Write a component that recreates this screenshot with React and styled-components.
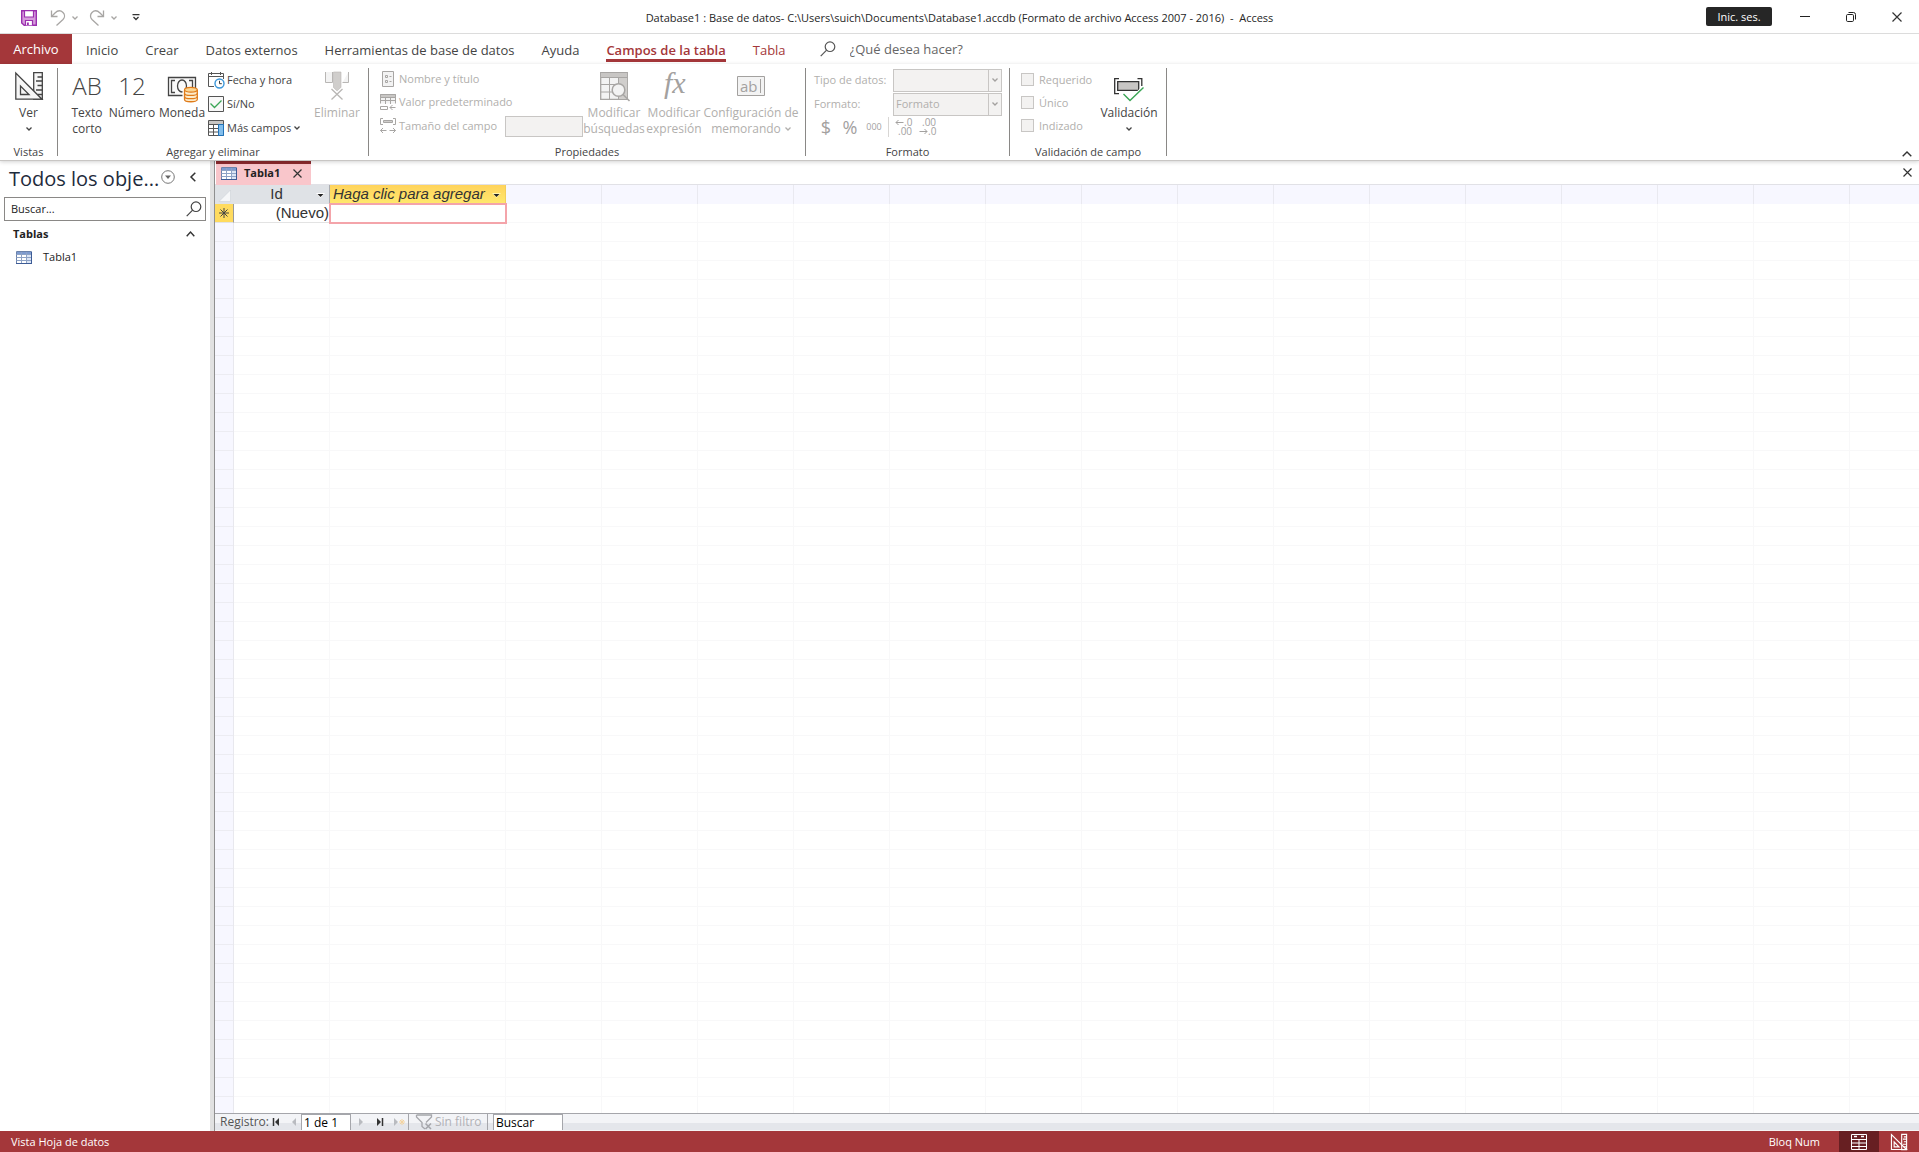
import React from 'react';
import styled, { createGlobalStyle, css } from 'styled-components';

const GlobalStyle = createGlobalStyle`
    * {
        box-sizing: border-box;
    }
    body {
        margin: 0;
        background: #fff;
        color: #444;
        font-family: "Open Sans", "Noto Sans", sans-serif;
        font-size: 11px;
        line-height: 16px;
    }
    button, input, select {
        font: inherit;
        color: inherit;
        margin: 0;
        padding: 0;
        border: 0;
        border-radius: 0;
        background: none;
    }
    svg {
        display: block;
        flex: none;
        overflow: visible;
    }
`

const Window = styled.div`
    height: 100vh;
    display: flex;
    flex-direction: column;
    overflow: hidden;
`

/* ---------- title bar ---------- */

const TitleBar = styled.header`
    display: grid;
    grid-template-columns: 1fr auto 1fr;
    align-items: center;
    height: 34px;
    flex: none;
    border-bottom: 1px solid #dcdcdc;
`

const QuickAccess = styled.div`
    display: flex;
    align-items: center;
    padding: 2px 0 0 21px;
`

const QuickButton = styled.button`
    display: flex;
    align-items: center;
    gap: 6px;
    margin-right: ${props => props.$after}px;
`

const Title = styled.h1`
    margin: 0;
    padding-top: 2px;
    font-size: 11px;
    font-weight: 400;
    color: #262626;
    white-space: pre;
`

const WindowControls = styled.div`
    display: flex;
    justify-content: flex-end;
    align-items: center;
`

const SignIn = styled.button`
    width: 66px;
    height: 19px;
    margin-right: 10px;
    border-radius: 2px;
    background: #262626;
    color: #fff;
`

const ControlButton = styled.button`
    display: flex;
    align-items: center;
    justify-content: center;
    width: 46px;
    height: 33px;
    &:last-child {
        width: 45px;
    }
`

/* ---------- ribbon tabs ---------- */

const Tabs = styled.nav`
    display: flex;
    align-items: stretch;
    height: 30px;
    flex: none;
    font-size: 13px;
`

const FileTab = styled.button`
    width: 72px;
    margin-right: 1px;
    background: #a4373a;
    color: #fff;
`

const Tab = styled.button`
    padding: 0 14px 2px 13px;
    white-space: nowrap;
    color: ${props => props.$context ? '#a4373a' : '#444'};
    font-weight: ${props => props.$active ? 600 : 400};
    span {
        display: block;
        padding-top: 7px;
        line-height: 18px;
        border-bottom: 3px solid ${props => props.$active ? '#a4373a' : 'transparent'};
    }
`

const TellMe = styled.label`
    display: flex;
    align-items: center;
    gap: 14px;
    margin-left: 20px;
    color: #666;
    input {
        width: 180px;
    }
    input::placeholder {
        color: #666;
        opacity: 1;
    }
`

/* ---------- ribbon ---------- */

const Ribbon = styled.section`
    position: relative;
    display: flex;
    flex: none;
    height: 97px;
    padding-top: 4px;
    border-bottom: 1px solid #c8c6c4;
    box-shadow: 0 1px 4px rgba(0,0,0,.18);
    z-index: 1;
`

const Group = styled.div`
    display: flex;
    flex-direction: column;
    width: ${props => props.$width}px;
`

const GroupBody = styled.div`
    display: flex;
    height: 76px;
    padding-left: ${props => props.$left || 0}px;
`

const GroupLabel = styled.div`
    text-align: center;
    color: #444;
    white-space: nowrap;
`

const Divider = styled.div`
    width: 1px;
    height: 88px;
    background: #8a8886;
`

const BigButton = styled.button`
    display: flex;
    flex-direction: column;
    align-items: center;
    width: ${props => props.$width}px;
    padding-top: 4px;
    font-size: 12px;
    white-space: nowrap;
    color: ${props => props.disabled ? '#b1afad' : '#444'};
`

const BigIcon = styled.span`
    display: flex;
    align-items: center;
    justify-content: center;
    height: 28px;
    margin-bottom: 5px;
    font-size: 24px;
    font-weight: 300;
`

const BigText = styled.span`
    display: flex;
    align-items: center;
    justify-content: center;
    gap: 4px;
    height: 16px;
`

const Stack = styled.div`
    display: flex;
    flex-direction: column;
    flex: none;
    width: ${props => props.$width}px;
`

const SmallButton = styled.button`
    display: flex;
    align-items: center;
    gap: 3px;
    height: ${props => props.$height || 24}px;
    white-space: nowrap;
    color: ${props => props.disabled ? '#b1afad' : '#444'};
`

const SizeRow = styled.label`
    display: flex;
    align-items: center;
    gap: 3px;
    height: 24px;
    white-space: nowrap;
    color: #b1afad;
    input {
        width: 78px;
        height: 21px;
        margin-left: auto;
        border: 1px solid #c8c6c4;
        background: #f3f2f1;
    }
`

const SelectRow = styled.label`
    display: flex;
    align-items: center;
    justify-content: space-between;
    height: 24px;
    color: #b1afad;
    white-space: nowrap;
`

const SelectBox = styled.span`
    display: grid;
    grid-template-columns: 1fr 13px;
    width: 109px;
    height: 23px;
    border: 1px solid #c8c6c4;
    background: #f3f2f1;
    select {
        appearance: none;
        min-width: 0;
        padding-left: 2px;
        opacity: 1;
        color: #b1afad;
    }
    span {
        display: flex;
        align-items: center;
        justify-content: center;
        border-left: 1px solid #c8c6c4;
    }
`

const FormatTools = styled.div`
    display: flex;
    align-items: center;
    height: 22px;
    color: #a3a19f;
`

const FormatButton = styled.button`
    width: 24px;
    display: flex;
    justify-content: center;
    color: #a3a19f;
    font-size: ${props => props.$size || 18}px;
`

const ToolLine = styled.span`
    width: 1px;
    height: 20px;
    margin: 0 2px;
    background: #d8d6d4;
`

const Check = styled.label`
    display: flex;
    align-items: center;
    gap: 5px;
    height: 23px;
    color: #b1afad;
    input {
        appearance: none;
        width: 13px;
        height: 13px;
        border: 1px solid #c8c6c4;
        background: #f3f2f1;
    }
`

const Collapse = styled.button`
    margin: auto 7px 3px auto;
`

/* ---------- work area ---------- */

const Work = styled.main`
    display: flex;
    flex: 1;
    min-height: 0;
`

const Pane = styled.aside`
    width: 215px;
    flex: none;
    border-right: 1px solid #8f8f8f;
    box-shadow: inset -4px 0 #e1e1e1;
    color: #222;
`

const PaneHead = styled.div`
    display: flex;
    align-items: center;
    height: 36px;
    padding-left: 9px;
    h2 {
        margin: 0;
        width: 152px;
        font-size: 20px;
        line-height: 28px;
        font-weight: 400;
        color: #1e2b3c;
        white-space: nowrap;
    }
    button {
        margin-bottom: 4px;
    }
    button + button {
        margin-left: 15px;
    }
`

const PaneSearch = styled.label`
    display: flex;
    align-items: center;
    justify-content: space-between;
    width: 202px;
    height: 24px;
    margin-left: 4px;
    padding: 0 3px 0 6px;
    border: 1px solid #8a8886;
    input {
        width: 160px;
    }
    input::placeholder {
        color: #222;
        opacity: 1;
    }
`

const PaneGroup = styled.button`
    display: flex;
    align-items: center;
    justify-content: space-between;
    width: 195px;
    height: 26px;
    padding-left: 13px;
    font-weight: 700;
`

const PaneItem = styled.a`
    display: flex;
    align-items: center;
    gap: 11px;
    height: 20px;
    padding-left: 16px;
    color: #222;
    text-decoration: none;
`

const Doc = styled.section`
    display: flex;
    flex-direction: column;
    flex: 1;
    min-width: 0;
`

const DocTabs = styled.div`
    display: flex;
    justify-content: space-between;
    align-items: center;
    height: 24px;
    flex: none;
    padding: 0 7px 0 1px;
    border-bottom: 1px solid #e1e1e6;
`

const DocTab = styled.div`
    display: flex;
    align-items: center;
    width: 95px;
    height: 24px;
    padding: 0 0 2px 5px;
    border-top: 3px solid #8b2a2e;
    background: #f9c6cb;
    color: #222;
    font-weight: 700;
    span {
        width: 49px;
        margin-left: 7px;
    }
`

const Sheet = styled.table`
    width: 100%;
    flex: none;
    table-layout: fixed;
    border-collapse: separate;
    border-spacing: 0;
    font-family: "Liberation Sans", Arial, sans-serif;
    font-size: 15px;
    color: #333;
    th, td {
        height: 19px;
        padding: 0;
        line-height: 18px;
        font-weight: 400;
        white-space: nowrap;
    }
`

const Corner = styled.th`
    background: #dfe2e6;
    svg {
        margin: 2px 0 0 4px;
    }
`

const ColumnHead = styled.th`
    border-right: 1px solid ${props => props.$add ? '#f3cf5a' : '#a9abb0'};
    background: ${props => props.$add ? 'linear-gradient(#ffd35c, #ffe96e)' : '#dfe2e6'};
    font-style: ${props => props.$add ? 'italic' : 'normal'};
    button {
        display: flex;
        align-items: center;
        width: 100%;
        height: 18px;
        padding: 0 4px 2px 3px;
        font-style: inherit;
    }
    span {
        flex: 1;
        line-height: 16px;
        text-align: ${props => props.$add ? 'left' : 'center'};
    }
    svg {
        margin-top: 2px;
    }
`

const columnLines = css`
    background-image: repeating-linear-gradient(90deg, transparent 0 95px, ${props => props.$line} 95px 96px);
`

const BlankHead = styled.td`
    background-color: #f7f7ff;
    ${columnLines}
`

const RowMark = styled.td`
    background: #ffdb5e;
    border-right: 1px solid #9a9a9a;
    border-bottom: 1px solid #e3e3e3;
    svg {
        margin: 0 0 0 4px;
    }
`

const Cell = styled.td`
    border-bottom: 1px solid #e3e3e3;
    text-align: right;
    && {
        padding-right: 1px;
    }
`

const ActiveCell = styled.td`
    position: relative;
    outline: 2px solid #f4a4aa;
    outline-offset: -1px;
    input {
        display: block;
        width: 100%;
        height: 18px;
        outline: none;
    }
`

const BlankRow = styled.td`
    border-bottom: 1px solid #f8f8f9;
    ${columnLines}
`

const Blank = styled.div`
    display: flex;
    flex: 1;
    min-height: 0;
`

const BlankColumn = styled.div`
    width: ${props => props.$width}px;
    flex: none;
    border-right: 1px solid ${props => props.$gutter ? '#e8e8ee' : '#f8f8f9'};
    background: repeating-linear-gradient(
        ${props => props.$gutter ? '#f7f7ff' : '#fff'} 0 18px,
        ${props => props.$gutter ? '#ececf2' : '#f8f8f9'} 18px 19px
    );
`

const BlankRest = styled.div`
    flex: 1;
    background:
        repeating-linear-gradient(90deg, transparent 0 95px, #f8f8f9 95px 96px),
        repeating-linear-gradient(#fff 0 18px, #f8f8f9 18px 19px);
`

/* ---------- record navigation + status bar ---------- */

const Records = styled.div`
    display: flex;
    align-items: center;
    height: 18px;
    flex: none;
    padding-left: 5px;
    border-top: 1px solid #a5a6ab;
    border-bottom: 1px solid #f3f3f3;
    background: linear-gradient(#f3f4f7 0 9px, #e4e6eb 9px);
    color: #555;
    font-size: 12px;
    input {
        height: 16px;
        padding-left: 2px;
        border: 1px solid #a5a6ab;
        border-bottom: 0;
        background: #fff;
        color: #000;
    }
    input::placeholder {
        color: #000;
        opacity: 1;
    }
`

const RecordLabel = styled.label`
    display: flex;
    align-items: center;
    width: 48px;
`

const RecordButton = styled.button`
    display: flex;
    justify-content: center;
    width: ${props => props.$width}px;
`

const PageInput = styled.input`
    width: 50px;
`

const FindInput = styled.input`
    width: 70px;
    margin-left: 5px;
`

const Filter = styled.button`
    display: flex;
    align-items: center;
    gap: 3px;
    width: 80px;
    height: 16px;
    padding-left: 7px;
    border-left: 1px solid #a5a6ab;
    border-right: 1px solid #a5a6ab;
    color: #b1b1b5;
    white-space: nowrap;
`

const StatusBar = styled.footer`
    display: flex;
    align-items: center;
    height: 21px;
    flex: none;
    padding-left: 11px;
    background: #a4373a;
    color: #fff;
`

const LockState = styled.span`
    margin-left: auto;
    margin-right: 19px;
`

const ViewButton = styled.button`
    display: flex;
    align-items: center;
    justify-content: center;
    width: 40px;
    height: 21px;
    background: ${props => props.$active ? '#671f22' : 'transparent'};
`

/* ---------- icons ---------- */

const Icon = ({ w = 16, h = 16, children, ...rest }) => (
    <svg width={w} height={h} viewBox={`0 0 ${w} ${h}`} fill="none" aria-hidden="true" {...rest}>
        {children}
    </svg>
)

const Chevron = ({ color = '#444' }) => (
    <Icon w={6} h={4} stroke={color} strokeWidth="1.3">
        <path d="M.5 .5 3 3 5.5 .5" />
    </Icon>
)

const BigChevronUp = ({ w = 10 }) => (
    <Icon w={w} h={6} stroke="#333" strokeWidth="1.4">
        <path d={`M.7 5.3 ${w / 2} 1 ${w - 0.7} 5.3`} />
    </Icon>
)

const SaveIcon = () => (
    <Icon>
        <path d="M.7 .7h14.600v14.600H3.200L.7 13z" fill="#d69bdc" stroke="#9a2fae" strokeWidth="1.4" />
        <path d="M3.500 .7h9v6.300h-9z" fill="#fff" stroke="#9a2fae" strokeWidth="1.2" />
        <path d="M4.500 15.300v-4.800h7v4.800" fill="#fff" stroke="#9a2fae" strokeWidth="1.2" />
        <path d="M6 12.500h1.800v2.500H6z" fill="#9a2fae" />
    </Icon>
)

const UndoIcon = () => (
    <Icon stroke="#a8a6a4" strokeWidth="1.3">
        <path d="M1.500 .5v6h6" />
        <path d="M1.800 6.200 5 3c3-3 6-2.500 8-.5s2 5 0 7L6.500 15.500" />
    </Icon>
)

const RedoIcon = () => (
    <Icon stroke="#a8a6a4" strokeWidth="1.3">
        <path d="M14.500 .5v6h-6" />
        <path d="M14.200 6.200 11 3C8 0 5 .5 3 2.500s-2 5 0 7l6.500 6" />
    </Icon>
)

const CustomizeIcon = () => (
    <Icon w={8} h={7} stroke="#333" strokeWidth="1.3">
        <path d="M.5 .7h7M1.500 3 4 5.500 6.500 3" />
    </Icon>
)

const CloseIcon = ({ size = 10 }) => (
    <Icon w={size} h={size} stroke="#333" strokeWidth="1.2">
        <path d={`M.5 .5l${size - 1} ${size - 1}M${size - 0.5} .5l-${size - 1} ${size - 1}`} />
    </Icon>
)

const SearchIcon = ({ color = '#555' }) => (
    <Icon stroke={color} strokeWidth="1.2">
        <circle cx="10" cy="5.7" r="4.8" />
        <path d="M6.600 9.200 .7 15.200" />
    </Icon>
)

const DesignIcon = ({ color = '#444', size = 28, fill = '#f6f6f6' }) => (
    <svg width={size} height={size} viewBox="0 0 28 28" fill="none" stroke={color} strokeWidth={size < 20 ? 2 : 1.3} aria-hidden="true">
        <path d="M18.700 .7h8.600v26.600h-8.600z" fill={fill} />
        <path d="M22.500 5h5M21 9h6.500M22.500 13.500h5M21 18h6.500M22.500 22.500h5" />
        <path d="M.8 1v26.200H27z" fill={fill} />
        <path d="M5.500 14v8.500h8.500z" />
    </svg>
)

const MoneyIcon = () => (
    <Icon w={30} h={28}>
        <g stroke="#444" strokeWidth="1.3">
            <path d="M1.500 5.500h27v18h-27z" fill="#fafafa" />
            <path d="M8 8.500H4.500v12H8M22 8.500h3.500v7" />
            <ellipse cx="15" cy="14" rx="4.500" ry="6" />
        </g>
        <path d="M17 18v9c0 4 13.500 4 13.500 0v-9z" fill="#fff" stroke="#fff" strokeWidth="3" />
        <g fill="#fdeccb" stroke="#e07b1a" strokeWidth="1.3">
            <path d="M17.500 18v9.500c0 3 12.800 3 12.800 0V18" />
            <path d="M17.500 21.200c0 3 12.800 3 12.800 0M17.500 24.400c0 3 12.800 3 12.800 0" fill="none" />
            <ellipse cx="23.9" cy="17.8" rx="6.4" ry="2.4" fill="#fbd591" />
        </g>
    </Icon>
)

const CalendarIcon = () => (
    <Icon stroke="#555">
        <path d="M6 14.500H.5v-13h15V7M.5 4.500h15M3.500 0v3M12.500 0v3" />
        <circle cx="11.5" cy="11.5" r="4.5" fill="#fff" stroke="#3a96d9" strokeWidth="1.4" />
        <path d="M11.500 8.800v2.900h2.300" stroke="#3a3a3a" />
    </Icon>
)

const YesNoIcon = () => (
    <Icon>
        <path d="M.5 .5h15v15H.5z" fill="#f8f8f8" stroke="#555" />
        <path d="M2.500 7.500 6.500 11.500 13.500 4.500" stroke="#3aa555" strokeWidth="1.3" />
    </Icon>
)

const FieldsIcon = () => (
    <Icon stroke="#555">
        <path d="M.5 .5h15v15H.5z" fill="#fff" />
        <path d="M1 1h14v3H1z" fill="#c8c6c4" stroke="none" />
        <path d="M.5 4.500h15M.5 8.500h10M.5 12h10M5.500 4.500v11" />
        <path d="M10.500 4.500h5v11h-5z" fill="#83beec" stroke="#2072b8" />
    </Icon>
)

const DeleteIcon = () => (
    <Icon w={25} h={28} stroke="#b8b6b4">
        <path d="M.5 0v10.500h7V0M17.500 10.500h6V0" fill="#f3f3f3" />
        <path d="M8.500 0h7.500v15.500L12.200 19l-3.700-3.500z" fill="#d0cecc" stroke="#b8b6b4" strokeWidth=".6" />
        <path d="M6.500 17l11 10.500M17.500 17l-11 10.500" stroke="#fff" strokeWidth="3.5" />
        <path d="M6.500 17l11 10.500M17.500 17l-11 10.500" strokeWidth="1.3" />
    </Icon>
)

const NameIcon = () => (
    <Icon stroke="#a8a6a4">
        <path d="M2.500 .5h11v15h-11z" fill="#f3f3f3" />
        <path d="M5.500 4.500h2v2h-2zM5.500 9.500h2v2h-2zM9.500 5.500h2M9.500 10.500h2" />
    </Icon>
)

const DefaultIcon = () => (
    <Icon stroke="#a8a6a4">
        <path d="M.5 9.500v-9h15v9" fill="#f3f3f3" />
        <path d="M.5 .5h15v3H.5z" fill="#c8c6c4" />
        <path d="M.5 6.500h15M5.500 3v7M10.500 3v7" />
        <path d="M.5 12.500h7v3h-7zM15.500 13.500h-5.500M12.500 11 10 13.500l2.500 2.500" />
    </Icon>
)

const SizeIcon = () => (
    <Icon stroke="#a8a6a4">
        <path d="M3 .5H.5v6H3M13 .5h2.500v6H13" />
        <path d="M3.500 2.500h9v2h-9z" fill="#d0cecc" />
        <path d="M.5 12.500h6M3 10 .5 12.500 3 15M9.500 12.500h6M13 10l2.500 2.500L13 15" />
    </Icon>
)

const LookupIcon = () => (
    <Icon w={28} h={28} stroke="#a8a6a4">
        <path d="M.7 .7h26.600v26.600H.7z" fill="#f3f3f3" strokeWidth="1.3" />
        <path d="M1 1h26v4H1z" fill="#c8c6c4" stroke="none" />
        <path d="M18.500 5h8.500v22h-8.500z" fill="#d0cecc" stroke="none" />
        <path d="M.5 5.500h27M.5 12.500h18M.5 20h18M9.500 5.500V27M18.500 5.500V27" />
        <circle cx="18.5" cy="18" r="6.3" fill="#f3f3f3" strokeWidth="1.5" />
        <path d="M23 22.500l6.500 6.500" strokeWidth="1.6" />
    </Icon>
)

const FxIcon = () => (
    <Icon w={24} h={28}>
        <text x="2" y="21" fontFamily="Liberation Serif, serif" fontStyle="italic" fontWeight="400" fontSize="30" fill="#a3a19f">fx</text>
    </Icon>
)

const MemoIcon = () => (
    <Icon w={28} h={20}>
        <path d="M.5 .5h27v19H.5z" fill="#f3f3f3" stroke="#a3a19f" />
        <text x="3" y="16" fontFamily="Open Sans, sans-serif" fontWeight="400" fontSize="15" fill="#a3a19f">ab</text>
        <path d="M23.500 3v14" stroke="#a3a19f" />
    </Icon>
)

const DecimalIcon = ({ less }) => (
    <Icon w={17} h={18} stroke="#a3a19f">
        <text x={less ? 3 : 9} y="8" stroke="none" fill="#a3a19f" fontFamily="Open Sans, sans-serif" fontSize="10">{less ? '.00' : '.0'}</text>
        <text x={less ? 9 : 3} y="17" stroke="none" fill="#a3a19f" fontFamily="Open Sans, sans-serif" fontSize="10">{less ? '.0' : '.00'}</text>
        <path d={less ? 'M.5 13.500H8M5.500 11 8 13.500 5.500 16' : 'M8.500 4.500H1M3.500 2 1 4.500 3.500 7'} />
    </Icon>
)

const ValidationIcon = () => (
    <Icon w={30} h={28} stroke="#333">
        <path d="M5 6.700H.7v15H5M23.500 6.700h4.300V14" strokeWidth="1.3" />
        <path d="M3.700 9.700h21v8.600h-21z" fill="#c8c6c4" strokeWidth="1.3" />
        <path d="M9.500 22l6.500 6.500L29.500 15.500" stroke="#fff" strokeWidth="3.5" />
        <path d="M9.500 22l6.500 6.500L29.500 15.500" stroke="#3aa555" strokeWidth="1.4" />
    </Icon>
)

const TableIcon = () => (
    <Icon w={16} h={13}>
        <path d="M.5 .5h15v12H.5z" fill="#fff" stroke="#6c83ab" />
        <path d="M1 1h14v2.500H1z" fill="#7d9bd0" />
        <path d="M11 3.500h4V12h-4z" fill="#dbe5f5" />
        <path d="M.5 3.500h15M.5 6.500h15M.5 9.500h15M5.500 1v11M10.500 1v11" stroke="#8ea3c6" />
        <path d="M0 12.500h16M15.500 1v12" stroke="#3d5c96" />
    </Icon>
)

const Arrow = ({ add }) => (
    <Icon w={9} h={6}>
        <path d="M0 1h9L4.500 6z" fill={add ? '#fff3b0' : '#fff'} />
        <path d="M1.500 2h6l-3 3z" fill="#222" />
    </Icon>
)

const DatasheetIcon = () => (
    <Icon stroke="#fff">
        <path d="M.5 .5h15v15H.5zM.5 5.500h15M.5 9h15M.5 12.500h15M8 5.500v10" />
        <path d="M3 2.500h3M10 2.500h3" strokeWidth="1.5" />
    </Icon>
)

const RecordIcon = ({ kind }) => {
    const live = kind === 'first' || kind === 'last'
    const back = kind === 'first' || kind === 'prev'
    return (
        <Icon w={12} h={8}>
            <path d={back ? 'M8 0v8L4 4z' : 'M2 0v8l4-4z'} fill={live ? '#333' : '#b9bbc0'} />
            {kind === 'first' && <path d="M2.500 0v8" stroke="#333" strokeWidth="1.5" />}
            {kind === 'last' && <path d="M7.500 0v8" stroke="#333" strokeWidth="1.5" />}
            {kind === 'new' && <path d="M10 1v6M7 4h6M8 2l4 4M12 2 8 6" stroke="#f3d3a0" />}
        </Icon>
    )
}

const FilterIcon = () => (
    <Icon stroke="#a5a6ab" strokeWidth="1.3">
        <path d="M.5 1h15v2L10 8.500M.5 1v2L6 8.500v4l3 2.500" />
        <path d="M9.500 9.500l5.500 5.500M15 9.500 9.500 15" strokeWidth="1.6" />
    </Icon>
)

/* ---------- pieces ---------- */

const Big = ({ icon, lines, width, disabled, menu }) => (
    <BigButton type="button" $width={width} disabled={disabled}>
        <BigIcon>{icon}</BigIcon>
        {lines.map((line, i) => (
            <BigText key={line}>
                {line}
                {menu && i === lines.length - 1 && i > 0 && <Chevron color={disabled ? '#b1afad' : '#444'} />}
            </BigText>
        ))}
        {menu && lines.length === 1 && <BigText><Chevron /></BigText>}
    </BigButton>
)

const Select = ({ label, value }) => (
    <SelectRow>
        {label}
        <SelectBox>
            <select disabled defaultValue={value}>
                <option value={value}>{value}</option>
            </select>
            <span><Chevron color="#a3a19f" /></span>
        </SelectBox>
    </SelectRow>
)

const tabs = [
    { name: 'Inicio' },
    { name: 'Crear' },
    { name: 'Datos externos' },
    { name: 'Herramientas de base de datos' },
    { name: 'Ayuda' },
    { name: 'Campos de la tabla', context: true, active: true },
    { name: 'Tabla', context: true },
]

const Header = () => (
    <TitleBar>
        <QuickAccess>
            <QuickButton type="button" aria-label="Guardar" $after={13}><SaveIcon /></QuickButton>
            <QuickButton type="button" aria-label="Deshacer" $after={11}><UndoIcon /><Chevron color="#a8a6a4" /></QuickButton>
            <QuickButton type="button" aria-label="Rehacer" $after={15}><RedoIcon /><Chevron color="#a8a6a4" /></QuickButton>
            <QuickButton type="button" aria-label="Personalizar" $after={0}><CustomizeIcon /></QuickButton>
        </QuickAccess>
        <Title>{'Database1 : Base de datos- C:\\Users\\suich\\Documents\\Database1.accdb (Formato de archivo Access 2007 - 2016)  -  Access'}</Title>
        <WindowControls>
            <SignIn type="button">Inic. ses.</SignIn>
            <ControlButton type="button" aria-label="Minimizar">
                <Icon w={10} h={2} stroke="#222"><path d="M0 .5h10" /></Icon>
            </ControlButton>
            <ControlButton type="button" aria-label="Restaurar">
                <Icon w={10} h={10} stroke="#222">
                    <rect x=".5" y="2.5" width="7" height="7" rx="1.2" />
                    <path d="M2.500 .5h5a2 2 0 0 1 2 2v5" />
                </Icon>
            </ControlButton>
            <ControlButton type="button" aria-label="Cerrar"><CloseIcon /></ControlButton>
        </WindowControls>
    </TitleBar>
)

const RibbonBar = () => (
    <Ribbon>
        <Group $width={57}>
            <GroupBody>
                <Big width={57} icon={<DesignIcon />} lines={['Ver']} menu />
            </GroupBody>
            <GroupLabel>Vistas</GroupLabel>
        </Group>
        <Divider />
        <Group $width={310}>
            <GroupBody $left={8}>
                <Big width={42} icon="AB" lines={['Texto', 'corto']} />
                <Big width={48} icon="12" lines={['Número']} />
                <Big width={52} icon={<MoneyIcon />} lines={['Moneda']} />
                <Stack $width={103}>
                    <SmallButton type="button"><CalendarIcon />Fecha y hora</SmallButton>
                    <SmallButton type="button"><YesNoIcon />Sí/No</SmallButton>
                    <SmallButton type="button"><FieldsIcon />Más campos<Chevron /></SmallButton>
                </Stack>
                <Big width={52} icon={<DeleteIcon />} lines={['Eliminar']} disabled />
            </GroupBody>
            <GroupLabel>Agregar y eliminar</GroupLabel>
        </Group>
        <Divider />
        <Group $width={436}>
            <GroupBody $left={11}>
                <Stack $width={203}>
                    <SmallButton type="button" disabled $height={22}><NameIcon />Nombre y título</SmallButton>
                    <SmallButton type="button" disabled><DefaultIcon />Valor predeterminado</SmallButton>
                    <SizeRow><SizeIcon />Tamaño del campo<input disabled /></SizeRow>
                </Stack>
                <Big width={62} icon={<LookupIcon />} lines={['Modificar', 'búsquedas']} disabled />
                <Big width={58} icon={<FxIcon />} lines={['Modificar', 'expresión']} disabled />
                <Big width={96} icon={<MemoIcon />} lines={['Configuración de', 'memorando']} disabled menu />
            </GroupBody>
            <GroupLabel>Propiedades</GroupLabel>
        </Group>
        <Divider />
        <Group $width={203}>
            <GroupBody $left={8}>
                <Stack $width={188}>
                    <Select label="Tipo de datos:" value="" />
                    <Select label="Formato:" value="Formato" />
                    <FormatTools>
                        <FormatButton type="button" disabled $size={18}>$</FormatButton>
                        <FormatButton type="button" disabled $size={18}>%</FormatButton>
                        <FormatButton type="button" disabled $size={9}>000</FormatButton>
                        <ToolLine />
                        <FormatButton type="button" disabled aria-label="Aumentar decimales"><DecimalIcon /></FormatButton>
                        <FormatButton type="button" disabled aria-label="Disminuir decimales"><DecimalIcon less /></FormatButton>
                    </FormatTools>
                </Stack>
            </GroupBody>
            <GroupLabel>Formato</GroupLabel>
        </Group>
        <Divider />
        <Group $width={156}>
            <GroupBody $left={11}>
                <Stack $width={80}>
                    <Check><input type="checkbox" disabled />Requerido</Check>
                    <Check><input type="checkbox" disabled />Único</Check>
                    <Check><input type="checkbox" disabled />Indizado</Check>
                </Stack>
                <Big width={56} icon={<ValidationIcon />} lines={['Validación']} menu />
            </GroupBody>
            <GroupLabel>Validación de campo</GroupLabel>
        </Group>
        <Divider />
        <Collapse type="button" aria-label="Contraer la cinta"><BigChevronUp /></Collapse>
    </Ribbon>
)

const NavigationPane = () => (
    <Pane>
        <PaneHead>
            <h2>Todos los obje...</h2>
            <button type="button" aria-label="Elegir categoría">
                <Icon w={14} h={14} stroke="#777">
                    <circle cx="7" cy="7" r="6.3" />
                    <path d="M4 5.500h6L7 9z" fill="#666" stroke="none" />
                </Icon>
            </button>
            <button type="button" aria-label="Contraer panel">
                <Icon w={6} h={10} stroke="#333" strokeWidth="1.5"><path d="M5.300 .7 1 5l4.300 4.300" /></Icon>
            </button>
        </PaneHead>
        <PaneSearch>
            <input placeholder="Buscar..." aria-label="Buscar" />
            <SearchIcon color="#444" />
        </PaneSearch>
        <PaneGroup type="button">Tablas<BigChevronUp w={9} /></PaneGroup>
        <PaneItem href="#tabla1"><TableIcon />Tabla1</PaneItem>
    </Pane>
)

const Datasheet = () => (
    <Doc>
        <DocTabs>
            <DocTab>
                <TableIcon />
                <span>Tabla1</span>
                <button type="button" aria-label="Cerrar Tabla1"><CloseIcon size={9} /></button>
            </DocTab>
            <button type="button" aria-label="Cerrar"><CloseIcon size={9} /></button>
        </DocTabs>
        <Sheet>
            <colgroup>
                <col style={{ width: 19 }} />
                <col style={{ width: 96 }} />
                <col style={{ width: 176 }} />
                <col />
            </colgroup>
            <thead>
                <tr>
                    <Corner aria-label="Seleccionar todo">
                        <Icon w={12} h={12}><path d="M11.500 0v11.500H0z" fill="#f6f7f9" stroke="#c9cdd3" strokeWidth=".5" /></Icon>
                    </Corner>
                    <ColumnHead><button type="button"><span>Id</span><Arrow /></button></ColumnHead>
                    <ColumnHead $add><button type="button"><span>Haga clic para agregar</span><Arrow add /></button></ColumnHead>
                    <BlankHead $line="#e9e9f0" />
                </tr>
            </thead>
            <tbody>
                <tr>
                    <RowMark>
                        <Icon w={10} h={10} stroke="#444"><path d="M5 0v10M0 5h10M1.500 1.500l7 7M8.500 1.500l-7 7" /></Icon>
                    </RowMark>
                    <Cell>(Nuevo)</Cell>
                    <ActiveCell><input aria-label="Haga clic para agregar" /></ActiveCell>
                    <BlankRow $line="#f8f8f9" />
                </tr>
            </tbody>
        </Sheet>
        <Blank>
            <BlankColumn $width={19} $gutter />
            <BlankColumn $width={96} />
            <BlankColumn $width={176} />
            <BlankRest />
        </Blank>
        <Records>
            <RecordLabel htmlFor="record">Registro:</RecordLabel>
            <RecordButton type="button" aria-label="Primero" $width={18}><RecordIcon kind="first" /></RecordButton>
            <RecordButton type="button" aria-label="Anterior" $width={15}><RecordIcon kind="prev" /></RecordButton>
            <PageInput id="record" defaultValue="1 de 1" />
            <RecordButton type="button" aria-label="Siguiente" $width={24}><RecordIcon kind="next" /></RecordButton>
            <RecordButton type="button" aria-label="Último" $width={12}><RecordIcon kind="last" /></RecordButton>
            <RecordButton type="button" aria-label="Nuevo" $width={21}><RecordIcon kind="new" /></RecordButton>
            <Filter type="button" disabled><FilterIcon />Sin filtro</Filter>
            <FindInput placeholder="Buscar" aria-label="Buscar registro" />
        </Records>
    </Doc>
)

const App = () => (
    <Window>
        <GlobalStyle />
        <Header />
        <Tabs>
            <FileTab type="button">Archivo</FileTab>
            {tabs.map(tab => (
                <Tab key={tab.name} type="button" $context={tab.context} $active={tab.active}>
                    <span>{tab.name}</span>
                </Tab>
            ))}
            <TellMe>
                <SearchIcon />
                <input placeholder="¿Qué desea hacer?" aria-label="¿Qué desea hacer?" />
            </TellMe>
        </Tabs>
        <RibbonBar />
        <Work>
            <NavigationPane />
            <Datasheet />
        </Work>
        <StatusBar>
            Vista Hoja de datos
            <LockState>Bloq Num</LockState>
            <ViewButton type="button" $active aria-label="Vista Hoja de datos"><DatasheetIcon /></ViewButton>
            <ViewButton type="button" aria-label="Vista Diseño"><DesignIcon color="#fff" size={16} fill="none" /></ViewButton>
        </StatusBar>
    </Window>
)

export default App;
